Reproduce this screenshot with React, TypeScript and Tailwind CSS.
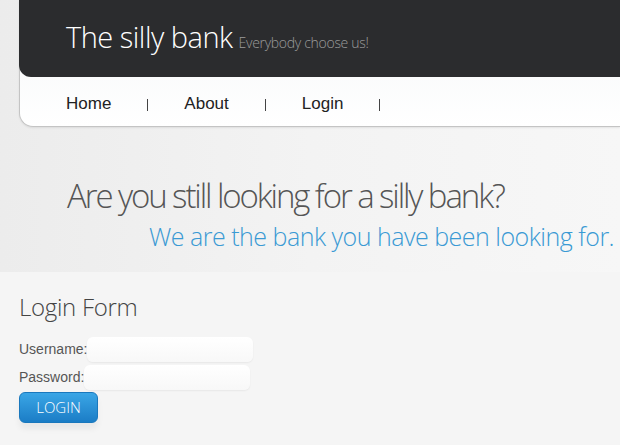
import React from "react";

export default function App() {
    const links = ["Home", "About", "Login"];

    return (
        <div className="w-[620px] h-[445px] overflow-hidden bg-[#f5f5f5]" style={{ fontFamily: "'Liberation Sans', Arial, sans-serif" }}>
            {/* top area */}
            <div className="h-[272px] bg-gradient-to-r from-[#ececec] via-[#f3f3f3] to-[#f7f7f7]">
                <div className="ml-[19px] rounded-bl-[14px] border-l border-b border-[#c4c4c4] bg-gradient-to-b from-[#f4f6f8] to-white shadow-[0_1px_2px_rgba(0,0,0,0.08)]">
                    <div className="h-[77px] bg-[#2b2c2e] rounded-bl-[12px] -ml-px flex items-end pb-[26px] pl-[47px]" style={{ fontFamily: "'Open Sans', sans-serif" }}>
                        <span className="text-white text-[29px] font-light leading-none tracking-[-0.5px]">The silly bank</span>
                        <span className="text-[#9c9c9c] text-[14px] font-light ml-[6px] leading-none mb-[1px] tracking-[-0.3px]">Everybody choose us!</span>
                    </div>
                    <nav className="h-[49px] flex items-center pl-[46px] pt-[5px] text-[17px] text-[#222]">
                        {links.map((l) => (
                            <React.Fragment key={l}>
                                <span>{l}</span>
                                <span className="mx-[36px] mt-[1px] w-px h-[12px] bg-[#444]" />
                            </React.Fragment>
                        ))}
                    </nav>
                </div>
                <div className="pt-[49px] pl-[67px]" style={{ fontFamily: "'Open Sans', sans-serif" }}>
                    <h1 className="text-[33px] font-light text-[#555] leading-[40px] tracking-[-2.1px]">Are you still looking for a silly bank?</h1>
                    <p className="mt-[4px] text-[25px] font-light text-[#3a9ad4] leading-[32px] pl-[82px] tracking-[-0.5px]">We are the bank you have been looking for.</p>
                </div>
            </div>

            {/* login */}
            <div className="pl-[19px] pt-[18px]">
                <h2 className="text-[24px] font-light text-[#444] leading-[34px] tracking-[-0.3px]" style={{ fontFamily: "'Open Sans', sans-serif" }}>Login Form</h2>
                <div className="mt-[13px] flex items-center text-[14px] text-[#555]">
                    <span>Username:</span>
                    <input className="w-[166px] h-[25px] rounded-[6px] bg-gradient-to-b from-white to-[#f8f8f8] shadow-[0_1px_2px_rgba(0,0,0,0.06)] outline-none" />
                </div>
                <div className="mt-[3px] flex items-center text-[14px] text-[#555]">
                    <span>Password:</span>
                    <input type="password" className="w-[166px] h-[25px] rounded-[6px] bg-gradient-to-b from-white to-[#f8f8f8] shadow-[0_1px_2px_rgba(0,0,0,0.06)] outline-none" />
                </div>
                <button className="mt-[2px] w-[79px] h-[31px] rounded-[6px] bg-gradient-to-b from-[#3aa6e6] to-[#1b7dc6] text-white text-[15px] font-light shadow-[0_6px_6px_rgba(0,0,0,0.05)] border border-[#1a78bd]" style={{ fontFamily: "'Open Sans', sans-serif" }}>LOGIN</button>
            </div>
        </div>
    );
}
